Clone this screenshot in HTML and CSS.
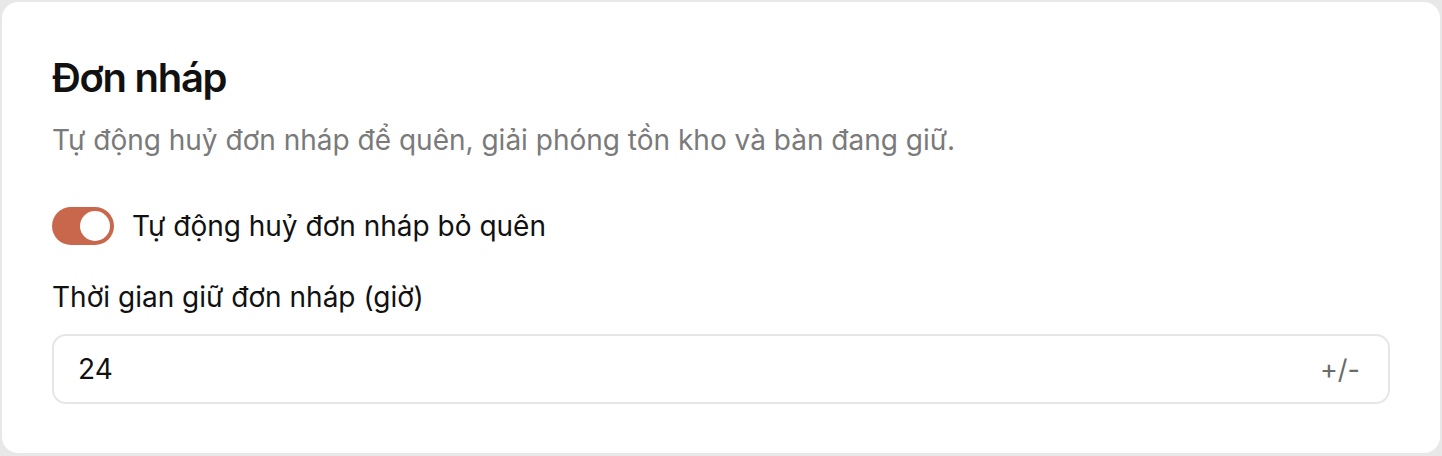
FILE: index.html
```html
<!DOCTYPE html>
<html lang="vi">

<head>
  <meta charset="UTF-8">
  <meta name="viewport" content="width=device-width, initial-scale=1.0">
  <title>Đơn nháp</title>
  <link rel="stylesheet" href="styles.css">
</head>

<body>
  <div class="card">
    <h2 class="card-title">Đơn nháp</h2>
    <p class="card-desc">Tự động huỷ đơn nháp để quên, giải phóng tồn kho và bàn đang giữ.</p>

    <label class="switch-row">
      <span class="switch on"><span class="knob"></span></span>
      <span>Tự động huỷ đơn nháp bỏ quên</span>
    </label>

    <div class="field">
      <label class="field-label" for="hold-hours">Thời gian giữ đơn nháp (giờ)</label>
      <div class="input-box">
        <input id="hold-hours" type="text" value="24">
        <span class="suffix">+/-</span>
      </div>
    </div>
  </div>
</body>

</html>
```

FILE: styles.css
```css
* {
  box-sizing: border-box;
}

body {
  margin: 0;
  background: #e8e8e8;
  font-family: Inter, "Noto Sans", sans-serif;
  color: #111;
}

.card {
  margin: 2px;
  height: 451px;
  background: #fff;
  border-radius: 16px;
  padding: 52px 50px 0 50px;
}

.card-title {
  margin: 0;
  font-size: 40px;
  font-weight: 600;
  line-height: 48px;
  letter-spacing: -1.3px;
}

.card-desc {
  margin: 18px 0 0;
  font-size: 28px;
  line-height: 40px;
  color: #7a7a7a;
}

.switch-row {
  display: flex;
  align-items: center;
  gap: 18px;
  margin-top: 46px;
  font-size: 28px;
  line-height: 40px;
}

.switch {
  width: 62px;
  height: 38px;
  border-radius: 19px;
  background: #c8674b;
  padding: 4px;
  display: flex;
  justify-content: flex-end;
}

.knob {
  width: 30px;
  height: 30px;
  border-radius: 50%;
  background: #fff;
}

.field {
  margin-top: 31px;
}

.field-label {
  display: block;
  font-size: 28px;
  line-height: 40px;
  margin-bottom: 17px;
}

.input-box {
  display: flex;
  align-items: center;
  height: 70px;
  border: 2px solid #e6e6e6;
  border-radius: 14px;
  padding: 0 28px 0 24px;
  width: 1338px;
}

.input-box input {
  flex: 1;
  border: none;
  outline: none;
  font: inherit;
  font-size: 28px;
  color: #111;
  background: transparent;
  padding: 0;
}

.suffix {
  font-size: 27px;
  color: #6b6b6b;
}
```
